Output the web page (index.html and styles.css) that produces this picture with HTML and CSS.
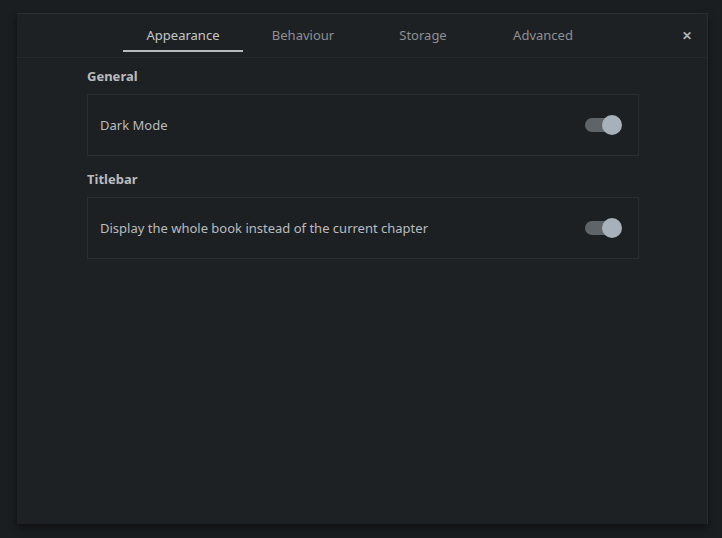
FILE: index.html
```html
<!DOCTYPE html>
<html>
<head>
<meta charset="utf-8">
<link rel="stylesheet" href="styles.css">
</head>
<body>
<div class="dialog">
  <div class="header">
    <nav class="tabs">
      <div class="tab active">Appearance</div>
      <div class="tab">Behaviour</div>
      <div class="tab">Storage</div>
      <div class="tab">Advanced</div>
    </nav>
    <div class="close">&#x2715;</div>
  </div>
  <div class="content">
    <div class="section-title">General</div>
    <div class="card">
      <span class="label">Dark Mode</span>
      <span class="switch"><span class="knob"></span></span>
    </div>
    <div class="section-title">Titlebar</div>
    <div class="card">
      <span class="label">Display the whole book instead of the current chapter</span>
      <span class="switch"><span class="knob"></span></span>
    </div>
  </div>
</div>
</body>
</html>
```
FILE: styles.css
```css
html, body {
  margin: 0;
  padding: 0;
  background: #1b1e21;
  height: 100%;
}
body {
  font-family: "Noto Sans", "Open Sans", sans-serif;
  font-size: 13px;
  color: #b9bcbf;
  padding: 13px 14px 14px 17px;
  box-sizing: border-box;
}
.dialog {
  width: 691px;
  height: 511px;
  background: #1e2124;
  border-top: 1px solid #2d3033;
  border-right: 1px solid #2a2d30;
  box-shadow: 0 4px 8px rgba(0,0,0,0.45);
  box-sizing: border-box;
  display: flex;
  flex-direction: column;
}
.header {
  height: 44px;
  border-bottom: 1px solid #26292c;
  position: relative;
  display: flex;
  justify-content: center;
  padding-left: 2px;
  box-sizing: border-box;
}
.tabs {
  display: flex;
}
.tab {
  width: 120px;
  text-align: center;
  color: #8d9094;
  box-sizing: border-box;
  height: 38px;
  line-height: 43px;
}
.tab.active {
  color: #c4c7ca;
  border-bottom: 2px solid #b8bbbe;
}
.close {
  position: absolute;
  right: 15px;
  top: 13px;
  font-size: 12px;
  font-weight: bold;
  color: #b0b3b6;
}
.content {
  width: 552px;
  margin-left: 70px;
  padding-top: 10px;
}
.section-title {
  font-weight: bold;
  color: #b9bcbf;
  height: 26px;
  line-height: 16px;
}
.card {
  height: 62px;
  border: 1px solid #2b2e31;
  box-sizing: border-box;
  display: flex;
  align-items: center;
  justify-content: space-between;
  padding: 0 17px 0 12px;
  margin-bottom: 15px;
  background: #1d2023;
}
.label {
  color: #b9bcbf;
}
.switch {
  width: 36px;
  height: 14px;
  border-radius: 7px;
  background: #5f6469;
  position: relative;
}
.knob {
  position: absolute;
  right: -1px;
  top: -3px;
  width: 20px;
  height: 20px;
  border-radius: 50%;
  background: #a6b1b9;
}
```
